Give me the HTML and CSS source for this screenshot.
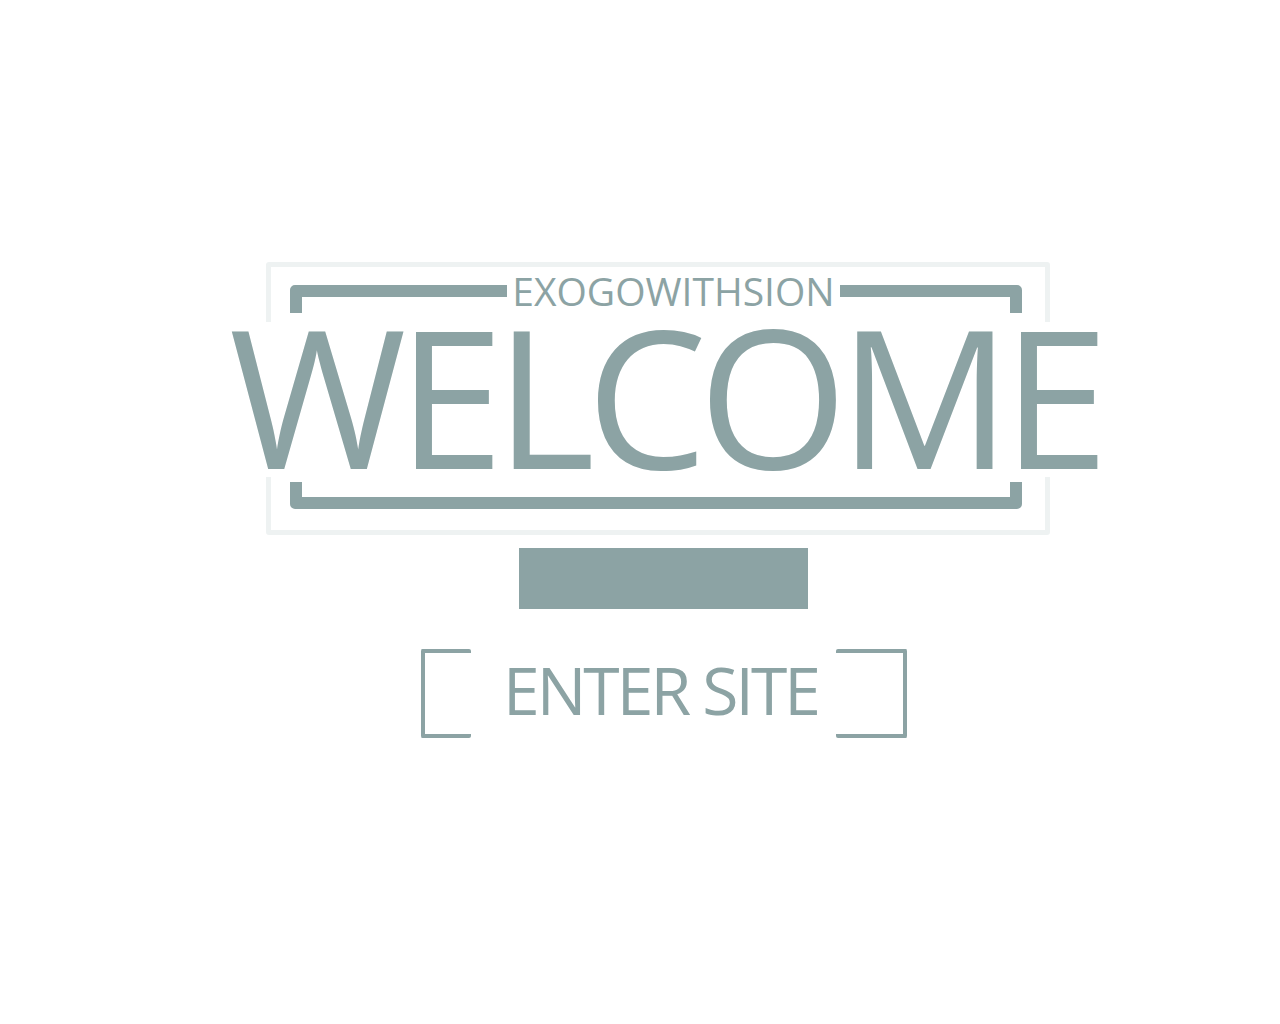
FILE: index.html
```html
<!DOCTYPE html>
<html lang="en">
<head>
<meta charset="utf-8">
<title>Welcome</title>
<link rel="stylesheet" href="styles.css">
</head>
<body>
<main class="stage">
  <div class="logo">
    <div class="frame-outer"></div>
    <div class="mask-outer"></div>
    <div class="frame-inner"></div>
    <div class="mask-inner"></div>
    <div class="tagline">EXOGOWITHSION</div>
    <h1 class="welcome">WELCOME</h1>
  </div>
  <div class="bar"></div>
  <a class="enter" href="#">
    <span class="bracket bracket-left"></span>
    <span class="enter-text">ENTER SITE</span>
    <span class="bracket bracket-right"></span>
  </a>
</main>
</body>
</html>
```

FILE: styles.css
```css
html, body {
  margin: 0;
  padding: 0;
  background: #ffffff;
}

body {
  font-family: "Open Sans", "Liberation Sans", sans-serif;
  color: #8ca3a4;
}

.stage {
  display: flex;
  flex-direction: column;
  align-items: center;
  padding-top: 262px;
}

.logo {
  position: relative;
  width: 784px;
  height: 273px;
  margin-left: 36px;
}

.frame-outer {
  position: absolute;
  inset: 0;
  border: 5px solid #eef2f2;
  border-radius: 3px;
}

.mask-outer {
  position: absolute;
  left: -2px;
  right: -2px;
  top: 60px;
  height: 155px;
  background: #ffffff;
}

.frame-inner {
  position: absolute;
  left: 24px;
  top: 23px;
  width: 732px;
  height: 224px;
  box-sizing: border-box;
  border: 12px solid #8ca3a4;
  border-radius: 5px;
}

.mask-inner {
  position: absolute;
  left: 22px;
  width: 736px;
  top: 51px;
  height: 169px;
  background: #ffffff;
}

.tagline {
  position: absolute;
  left: 241px;
  width: 333px;
  top: 9px;
  height: 40px;
  background: #ffffff;
  text-align: center;
  font-size: 39px;
  line-height: 1;
}

.welcome {
  position: absolute;
  left: -37px;
  top: 63px;
  margin: 0;
  font-weight: 400;
  font-size: 192px;
  line-height: 140px;
  letter-spacing: -9px;
  white-space: nowrap;
}

.bar {
  width: 289px;
  height: 61px;
  margin-top: 13px;
  margin-left: 47px;
  background: #8ca3a4;
}

.enter {
  display: flex;
  align-items: center;
  width: 486px;
  height: 89px;
  margin-top: 40px;
  margin-left: 48px;
  color: #8ca3a4;
  text-decoration: none;
}

.bracket {
  width: 50px;
  height: 89px;
  box-sizing: border-box;
  border: 4px solid #8ca3a4;
  border-radius: 2px;
}

.bracket-left {
  border-right: none;
}

.bracket-right {
  width: 71px;
  border-left: none;
}

.enter-text {
  flex: 1;
  padding-left: 32px;
  margin-bottom: 10px;
  font-size: 66px;
  line-height: 1;
  letter-spacing: -3px;
  white-space: nowrap;
}
```
